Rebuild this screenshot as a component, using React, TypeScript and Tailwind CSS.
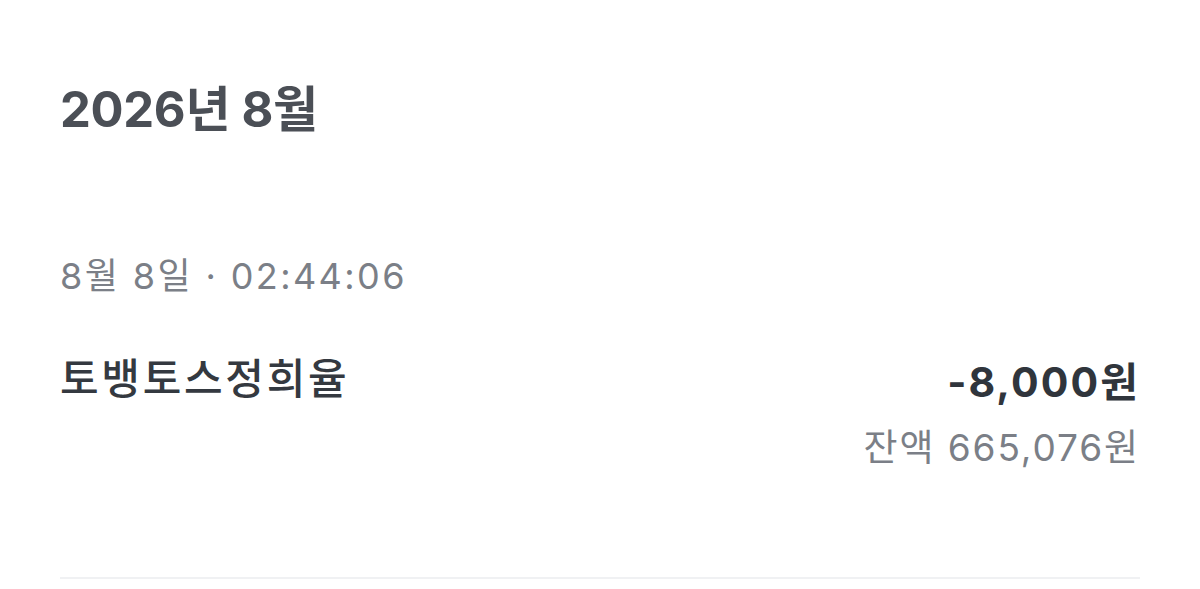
export default function App() {
  const font = { fontFamily: 'Inter, "Noto Sans CJK KR", sans-serif' };
  return (
    <div className="w-[1200px] h-[589px] bg-white overflow-hidden" style={font}>
      <div className="px-[60px]">
        <div className="pt-[80px] text-[49px] font-bold leading-[60px] text-[#4b4f56] tracking-[-0.3px]">2026년 8월</div>
        <div className="pt-[114px] text-[36px] leading-[44px] text-[#7b7f87] tracking-[2.4px]">8월 8일 · 02:44:06</div>
        <div className="pt-[59px] flex justify-between items-start">
          <div className="mt-[-3px] text-[42px] font-medium leading-[50px] text-[#343940] tracking-[2.7px]">토뱅토스정희율</div>
          <div className="flex flex-col items-end">
            <div className="text-[41px] font-bold leading-[50px] text-[#30353c] tracking-[2.1px]">-8,000원</div>
            <div className="mt-[16px] text-[37px] leading-[50px] text-[#7b7f87] tracking-[1.9px]">잔액 665,076원</div>
          </div>
        </div>
        <div className="mt-[104px] h-[2px] bg-[#f0f1f3]" />
      </div>
    </div>
  );
}
